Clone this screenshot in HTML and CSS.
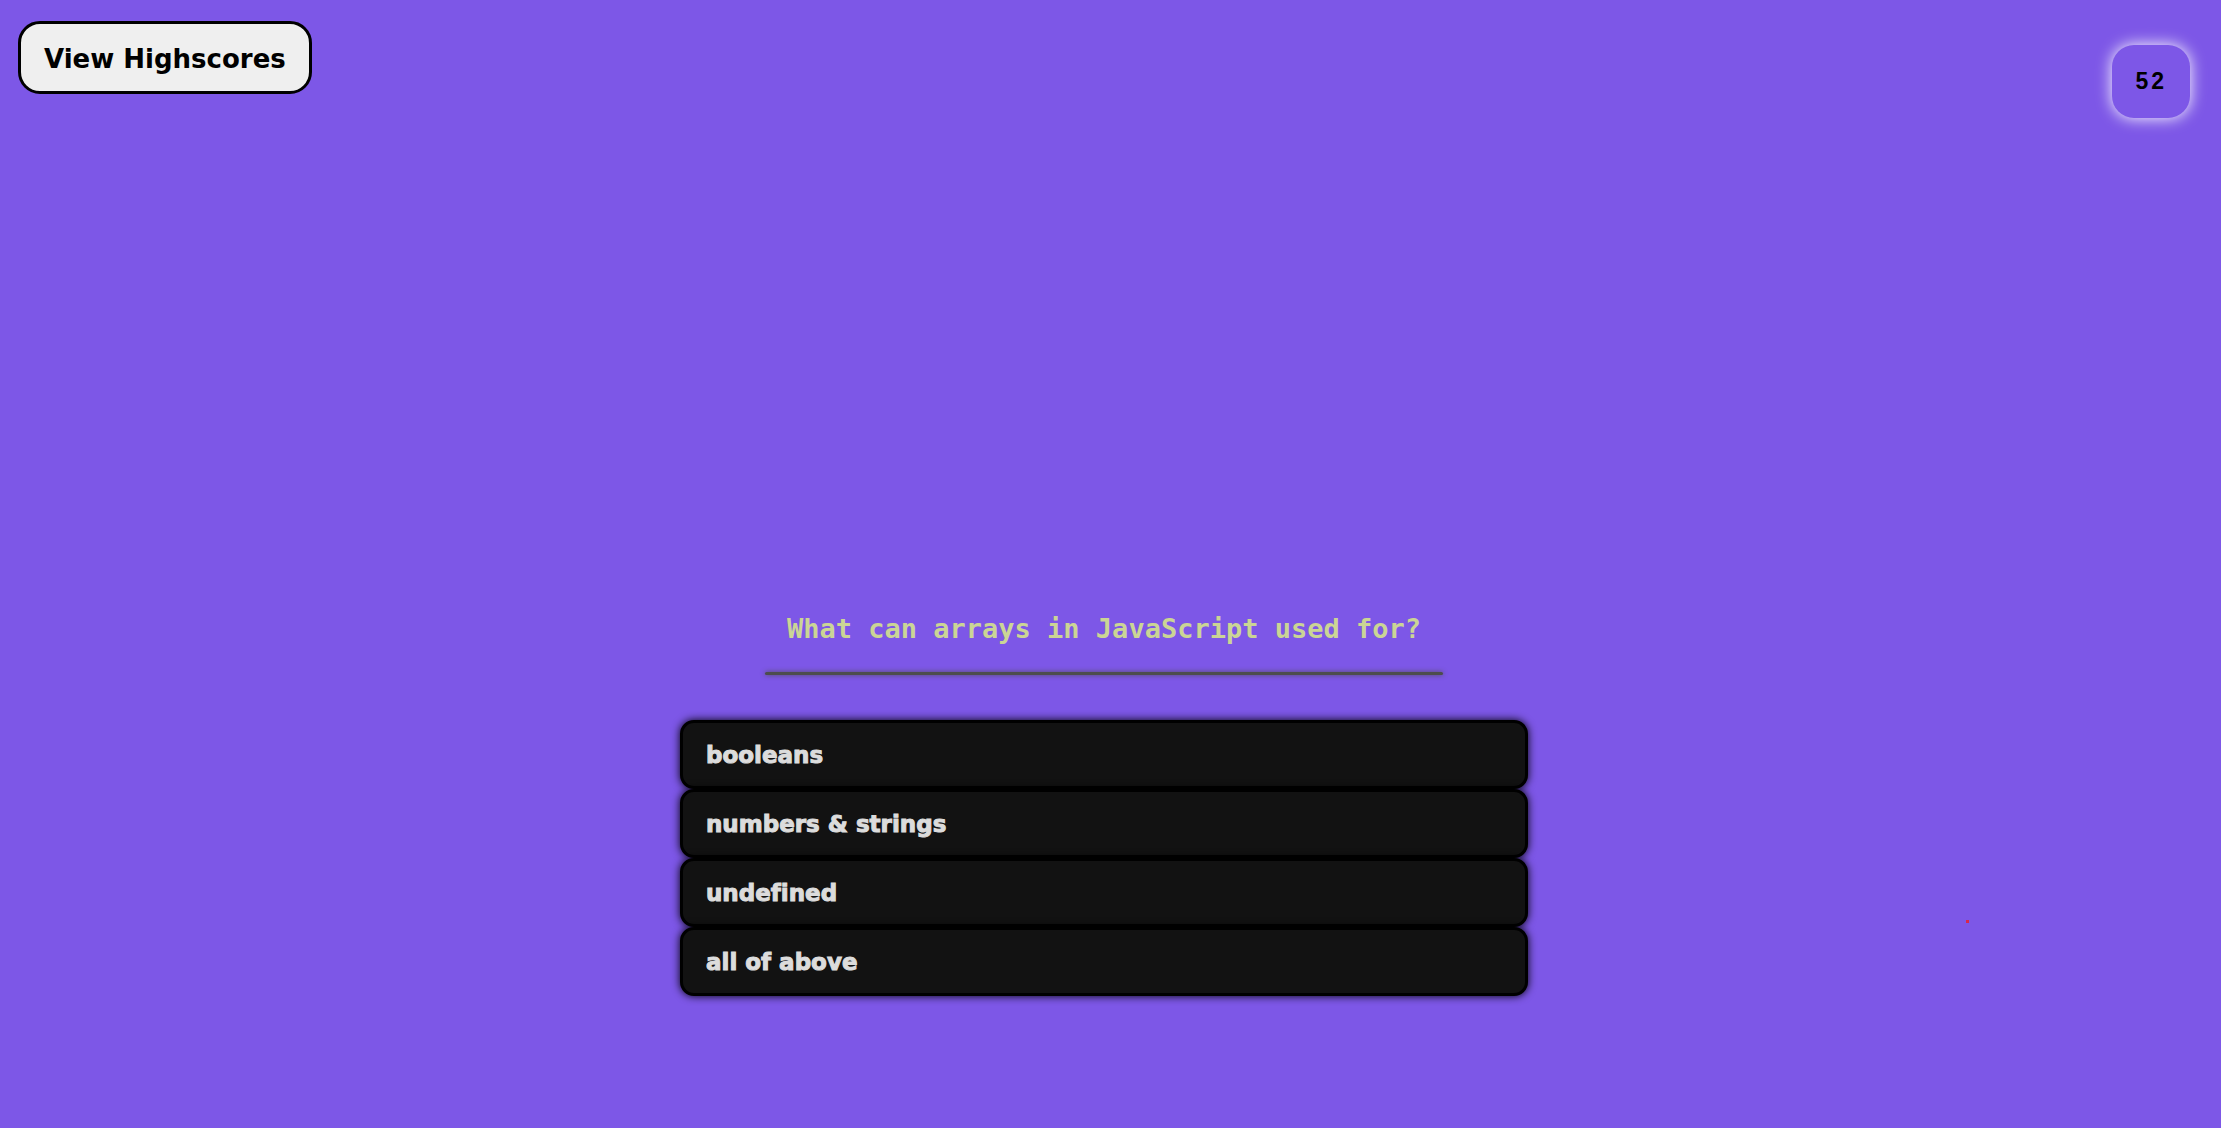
FILE: index.html
```html
<!DOCTYPE html>
<html lang="en">
<head>
  <meta charset="utf-8">
  <meta name="viewport" content="width=device-width, initial-scale=1">
  <title>Code Quiz</title>
  <link rel="stylesheet" href="styles.css">
</head>
<body>
  <header class="topbar">
    <button class="highscores" type="button">View Highscores</button>
    <div class="timer" role="timer">52</div>
  </header>
  <main class="quiz">
    <h1 class="question">What can arrays in JavaScript used for?</h1>
    <hr class="divider">
    <div class="choices">
      <button class="choice" type="button">booleans</button>
      <button class="choice" type="button">numbers &amp; strings</button>
      <button class="choice" type="button">undefined</button>
      <button class="choice" type="button">all of above</button>
    </div>
  </main>
  <span class="speck"></span>
</body>
</html>
```
FILE: styles.css
```css
* {
  box-sizing: border-box;
}

body {
  position: relative;
  display: flex;
  flex-direction: column;
  min-height: 100vh;
  margin: 0;
  background: #7d57e7;
  font-family: "Liberation Sans", Arial, sans-serif;
}

.topbar {
  display: flex;
  justify-content: space-between;
  align-items: flex-start;
  padding: 21px 31px 0 18px;
}

.highscores {
  padding: 20px 23px 16px;
  border: 3px solid #000;
  border-radius: 22px;
  background: #efefef;
  color: #000;
  font: bold 26px/31px "DejaVu Sans", sans-serif;
}

.timer {
  margin-top: 24px;
  padding: 21px 23px;
  border-radius: 22px;
  box-shadow: 0 0 16px #fff;
  color: #000;
  font-size: 23px;
  font-weight: bold;
  line-height: 31px;
  letter-spacing: 3px;
}

.quiz {
  display: flex;
  flex-direction: column;
  align-items: center;
  margin-top: auto;
  padding: 0 13px 132px 0;
}

.question {
  margin: 0 0 27px;
  color: #cbd595;
  font: bold 27px/32px "DejaVu Sans Mono", monospace;
  text-align: center;
}

.divider {
  width: 100%;
  max-width: 678px;
  height: 3px;
  margin: 0 0 45px;
  border: 0;
  border-radius: 2px;
  background: #4d4d4d;
  box-shadow: 0 0 5px #4d4d4d;
}

.choices {
  display: flex;
  flex-direction: column;
  width: 100%;
  max-width: 848px;
}

.choice {
  padding: 17px 23px 15px;
  border: 3px solid #000;
  border-radius: 14px;
  background: #121212;
  box-shadow: 0 0 8px #000;
  color: #dcdcdc;
  font: bold 23px/31px "DejaVu Sans", sans-serif;
  font-variant-ligatures: none;
  -webkit-text-stroke: 1px #dcdcdc;
  text-align: left;
}

.speck {
  position: absolute;
  top: 920px;
  left: 1966px;
  width: 3px;
  height: 3px;
  background: #d8284a;
}
```
